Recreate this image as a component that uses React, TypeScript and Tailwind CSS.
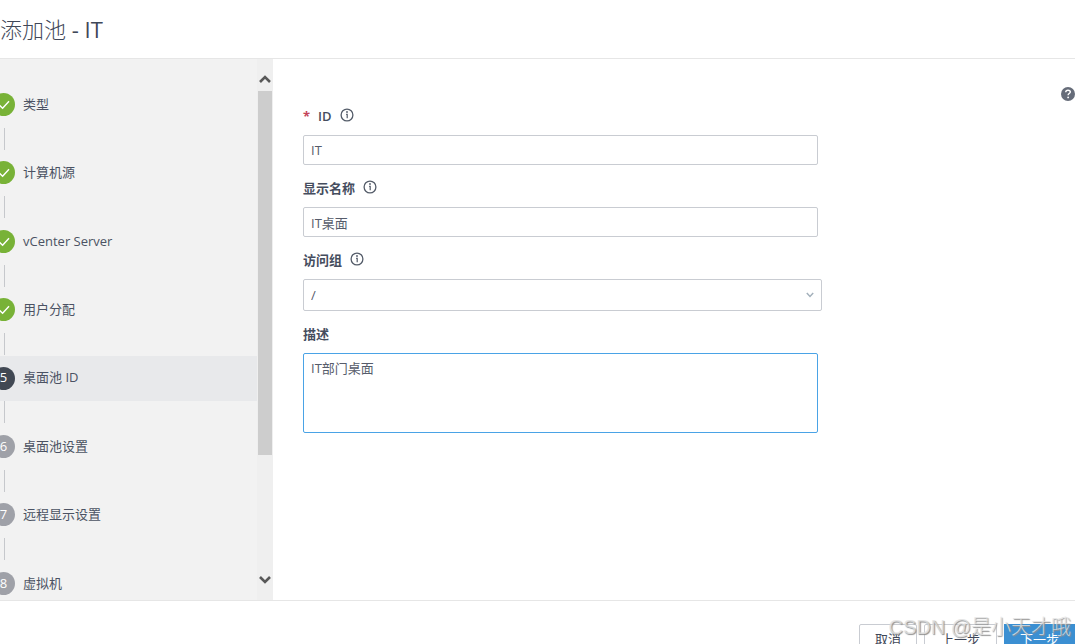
import { useState } from "react";
import type { ReactNode } from "react";
import clsx from "clsx";

const steps = [
  "类型",
  "计算机源",
  "vCenter Server",
  "用户分配",
  "桌面池 ID",
  "桌面池设置",
  "远程显示设置",
  "虚拟机",
];

const fieldClass =
  "block w-full rounded-[2px] border border-[#c9ccd2] bg-white px-[7px] text-[13px] text-[#565c6b] outline-none focus:border-[#4aa3e6]";

const InfoIcon = () => (
  <svg viewBox="0 0 14 14" className="size-3.5" fill="none" aria-hidden="true">
    <circle cx="7" cy="7" r="5.9" stroke="#545c69" strokeWidth="1.3" />
    <path d="M6.1 6.3h1.1v4" stroke="#545c69" strokeWidth="1.2" />
    <circle cx="7" cy="4" r="0.9" fill="#545c69" />
  </svg>
);

const Arrow = ({ up }: { up?: boolean }) => (
  <svg viewBox="0 0 12 8" className="h-2 w-3" fill="none" aria-hidden="true">
    <path
      d={up ? "M1 7l5-5 5 5" : "M1 1l5 5 5-5"}
      stroke="#585858"
      strokeWidth="2.6"
    />
  </svg>
);

type FieldProps = {
  id: string;
  label: string;
  required?: boolean;
  info?: boolean;
  children: ReactNode;
};

const Field = ({ id, label, required, info, children }: FieldProps) => (
  <div>
    <div className="mb-[9px] flex h-5 items-center">
      {required && (
        <span className="mr-2 text-[13px] leading-5 font-bold text-[#c4455a]">*</span>
      )}
      <label htmlFor={id} className="text-[13px] leading-5 font-semibold text-[#454d5e]">
        {label}
      </label>
      {info && (
        <button type="button" aria-label={`${label} 说明`} className="mb-0.5 ml-2">
          <InfoIcon />
        </button>
      )}
    </div>
    {children}
  </div>
);

const StepList = ({ current }: { current: number }) => (
  <ol className="flex h-[524px] shrink-0 flex-col justify-between">
    {steps.map((step, index) => {
      const num = index + 1;
      return (
        <li key={step} className="contents">
          {index > 0 && <span className="ml-1 h-[22px] w-px bg-[#c6c8cc]" />}
          <button
            type="button"
            className={clsx(
              "flex h-[45px] w-full items-center gap-2 text-left text-[13px] text-[#4b5263]",
              num === current && "bg-[#e8e9eb]"
            )}
          >
            <span
              className={clsx(
                "-ml-2 flex size-[23px] shrink-0 items-center justify-center rounded-full text-white",
                num < current && "bg-[#78b237]",
                num === current && "bg-[#414853]",
                num > current && "bg-[#9fa1a8]"
              )}
            >
              {num < current ? (
                <svg viewBox="0 0 23 23" className="size-[23px]" fill="none" aria-hidden="true">
                  <path d="M7 11.8l3.6 3.5 6.4-7" stroke="#fff" strokeWidth="1.4" />
                </svg>
              ) : (
                num
              )}
            </span>
            <span>{step}</span>
          </button>
        </li>
      );
    })}
  </ol>
);

const App = () => {
  const [poolId, setPoolId] = useState("IT");
  const [displayName, setDisplayName] = useState("IT桌面");
  const [description, setDescription] = useState("IT部门桌面");

  return (
    <div className="flex h-screen flex-col overflow-hidden bg-white font-['Open_Sans','Noto_Sans_CJK_SC',sans-serif]">
      <header className="flex h-[59px] shrink-0 items-center border-b border-[#e6e6e6]">
        <h1 className="text-[22px] leading-8 font-light text-[#3f4758]">
          添加池 <span className="font-normal">- IT</span>
        </h1>
      </header>

      <main className="flex min-h-0 flex-1">
        <aside className="flex w-[273px] shrink-0 bg-[#f2f2f2]">
          <nav aria-label="步骤" className="flex-1 overflow-hidden pt-[23px]">
            <StepList current={5} />
          </nav>
          {/* scrollbar */}
          <div className="flex w-4 flex-col bg-[#efefef]">
            <button type="button" aria-label="向上滚动" className="flex h-8 items-center justify-center pt-2">
              <Arrow up />
            </button>
            <div className="flex-1">
              <div className="mx-px h-[77%] bg-[#cdcdcd]" />
            </div>
            <button type="button" aria-label="向下滚动" className="mb-1 flex h-8 items-center justify-center">
              <Arrow />
            </button>
          </div>
        </aside>

        <section className="flex flex-1 items-start justify-between pl-[30px]">
          <form className="flex w-full max-w-[519px] flex-col gap-[13px] pt-[47px]">
            <Field id="pool-id" label="ID" required info>
              <div className="pr-1">
                <input
                  id="pool-id"
                  type="text"
                  value={poolId}
                  onChange={(e) => setPoolId(e.target.value)}
                  className={clsx(fieldClass, "h-[30px]")}
                />
              </div>
            </Field>
            <Field id="display-name" label="显示名称" info>
              <div className="pr-1">
                <input
                  id="display-name"
                  type="text"
                  value={displayName}
                  onChange={(e) => setDisplayName(e.target.value)}
                  className={clsx(fieldClass, "h-[30px]")}
                />
              </div>
            </Field>
            <Field id="access-group" label="访问组" info>
              <div className="relative">
                <select id="access-group" className={clsx(fieldClass, "h-8 appearance-none pt-0.5")}>
                  <option>/</option>
                </select>
                <svg
                  viewBox="0 0 8 6"
                  className="pointer-events-none absolute top-[13px] right-2 h-1.5 w-2"
                  fill="none"
                  aria-hidden="true"
                >
                  <path d="M0.8 1l3.2 3.4L7.2 1" stroke="#a3b0bb" strokeWidth="1.5" />
                </svg>
              </div>
            </Field>
            <Field id="description" label="描述">
              <div className="pr-1">
                <textarea
                  id="description"
                  value={description}
                  onChange={(e) => setDescription(e.target.value)}
                  className="block h-20 w-full resize-none rounded-[2px] border border-[#4aa3e6] bg-white px-[7px] py-1 text-[13px] leading-5 text-[#565c6b] outline-none"
                />
              </div>
            </Field>
          </form>

          <button type="button" aria-label="帮助" className="mt-7 shrink-0">
            <svg viewBox="0 0 14 14" className="size-3.5" fill="none" aria-hidden="true">
              <circle cx="7" cy="7" r="7" fill="#666c79" />
              <path
                d="M4.7 5.2c.1-1.3 1-2 2.3-2s2.3.7 2.3 1.8c0 1.5-2.2 1.6-2.2 3.2"
                stroke="#fff"
                strokeWidth="1.4"
              />
              <circle cx="7.1" cy="10.4" r="0.9" fill="#fff" />
            </svg>
          </button>
        </section>
      </main>

      <footer className="relative flex h-11 shrink-0 items-start justify-end gap-[7px] border-t border-[#e6e6e6] pt-[23px] text-[13px] text-[#3f4758]">
        <button type="button" className="h-8 shrink-0 rounded-[2px] border border-[#c9ccd2] px-[15px]">
          取消
        </button>
        <button type="button" className="h-8 shrink-0 rounded-[2px] border border-[#c9ccd2] px-4">
          上一步
        </button>
        <button type="button" className="h-8 shrink-0 bg-[#3b8fd2] px-4 text-white">
          下一步
        </button>
        <span className="pointer-events-none absolute top-3 right-1 font-['Liberation_Sans','Noto_Sans_CJK_SC',sans-serif] text-xl leading-7 font-light whitespace-nowrap text-[#e2e2e2]/80 [text-shadow:1px_1px_1px_#909090]">
          CSDN @是小天才哦
        </span>
      </footer>
    </div>
  );
};

export default App;
